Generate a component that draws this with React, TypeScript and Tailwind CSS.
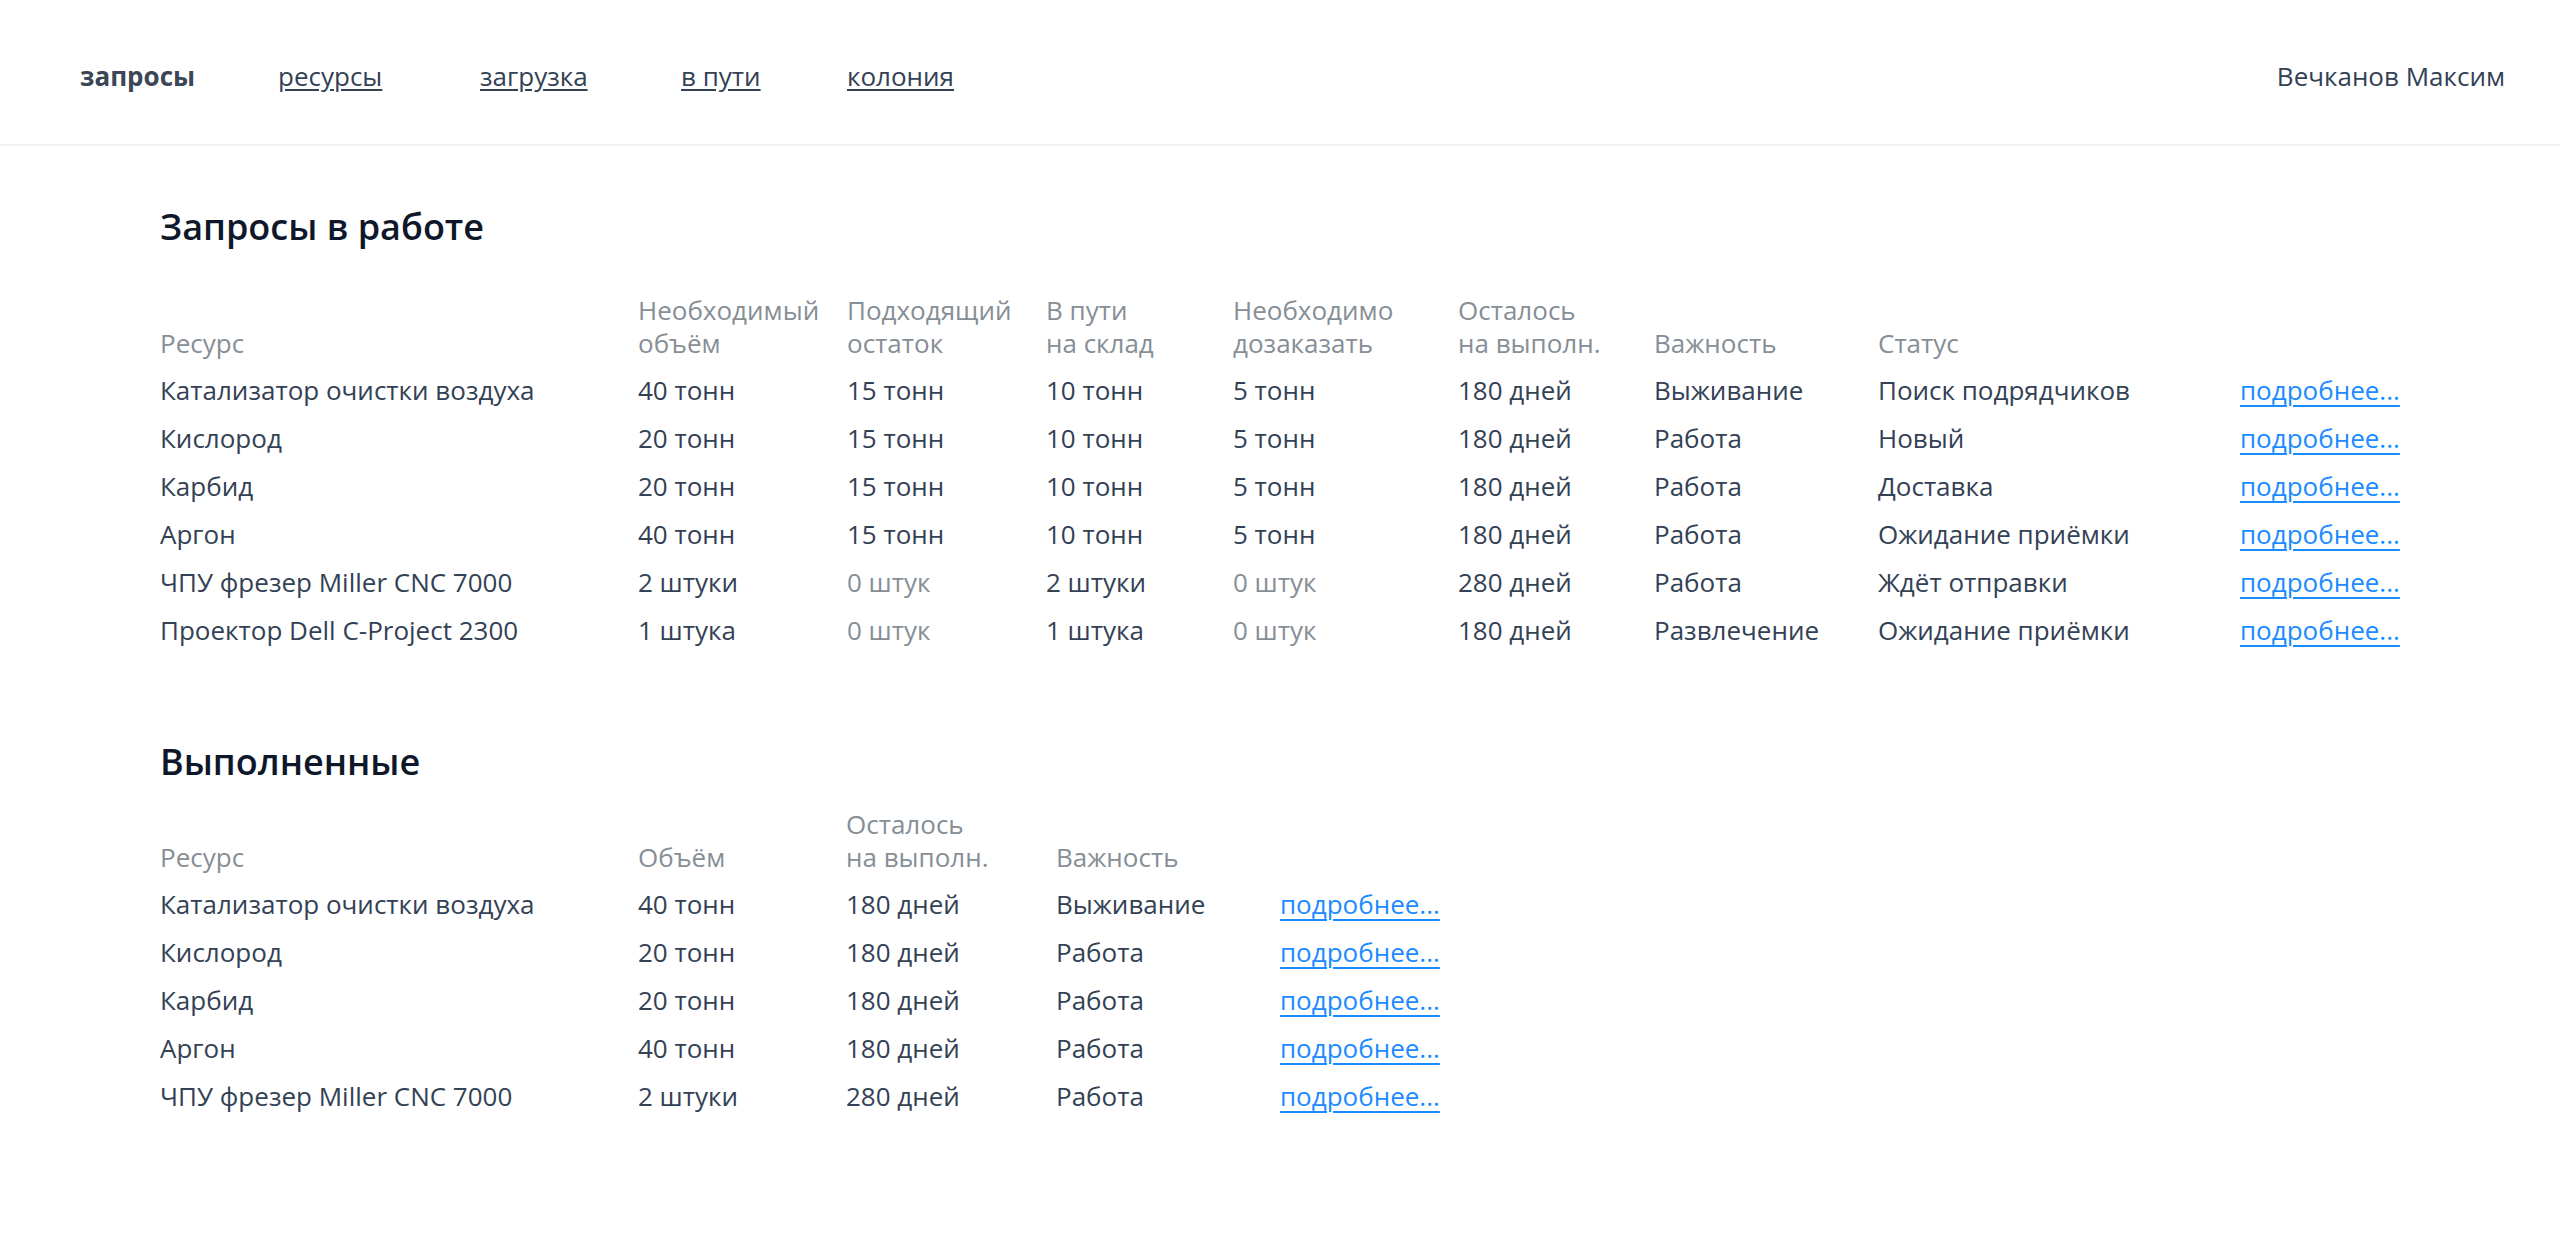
import React from 'react';

type ActiveRow = {
  name: string;
  need: string;
  fit: string;
  fitMuted?: boolean;
  transit: string;
  order: string;
  orderMuted?: boolean;
  left: string;
  priority: string;
  status: string;
};

type DoneRow = {
  name: string;
  volume: string;
  left: string;
  priority: string;
};

const activeRows: ActiveRow[] = [
  { name: 'Катализатор очистки воздуха', need: '40 тонн', fit: '15 тонн', transit: '10 тонн', order: '5 тонн', left: '180 дней', priority: 'Выживание', status: 'Поиск подрядчиков' },
  { name: 'Кислород', need: '20 тонн', fit: '15 тонн', transit: '10 тонн', order: '5 тонн', left: '180 дней', priority: 'Работа', status: 'Новый' },
  { name: 'Карбид', need: '20 тонн', fit: '15 тонн', transit: '10 тонн', order: '5 тонн', left: '180 дней', priority: 'Работа', status: 'Доставка' },
  { name: 'Аргон', need: '40 тонн', fit: '15 тонн', transit: '10 тонн', order: '5 тонн', left: '180 дней', priority: 'Работа', status: 'Ожидание приёмки' },
  { name: 'ЧПУ фрезер Miller CNC 7000', need: '2 штуки', fit: '0 штук', fitMuted: true, transit: '2 штуки', order: '0 штук', orderMuted: true, left: '280 дней', priority: 'Работа', status: 'Ждёт отправки' },
  { name: 'Проектор Dell C-Project 2300', need: '1 штука', fit: '0 штук', fitMuted: true, transit: '1 штука', order: '0 штук', orderMuted: true, left: '180 дней', priority: 'Развлечение', status: 'Ожидание приёмки' },
];

const doneRows: DoneRow[] = [
  { name: 'Катализатор очистки воздуха', volume: '40 тонн', left: '180 дней', priority: 'Выживание' },
  { name: 'Кислород', volume: '20 тонн', left: '180 дней', priority: 'Работа' },
  { name: 'Карбид', volume: '20 тонн', left: '180 дней', priority: 'Работа' },
  { name: 'Аргон', volume: '40 тонн', left: '180 дней', priority: 'Работа' },
  { name: 'ЧПУ фрезер Miller CNC 7000', volume: '2 штуки', left: '280 дней', priority: 'Работа' },
];

const font = { fontFamily: '"Open Sans", "Noto Sans", sans-serif' };

// ширины колонок взяты со скриншота
const activeCols = 'grid grid-cols-[478px_209px_199px_187px_225px_196px_224px_362px_auto]';
const doneCols = 'grid grid-cols-[478px_208px_210px_224px_auto]';

function Head({ children }: { children: React.ReactNode }) {
  return <div className="text-[#868e96] leading-[33px]">{children}</div>;
}

function More() {
  return (
    <a href="#" className="text-[#1a8cff] underline underline-offset-[5px] decoration-[2px]">
      подробнее...
    </a>
  );
}

export default function App() {
  return (
    <div className="min-h-screen bg-white text-[#334155] text-[26px]" style={font}>
      {/* шапка */}
      <header className="h-[146px] border-b-2 border-[#f2f2f2] flex items-center justify-between pt-[8px] pl-[80px] pr-[55px]">
        <nav className="flex items-center">
          <span className="w-[198px] font-bold text-[#3b4656]">запросы</span>
          <a href="#" className="w-[202px] underline underline-offset-[3px]">ресурсы</a>
          <a href="#" className="w-[201px] underline underline-offset-[3px]">загрузка</a>
          <a href="#" className="w-[166px] underline underline-offset-[3px]">в пути</a>
          <a href="#" className="underline underline-offset-[3px]">колония</a>
        </nav>
        <div>Вечканов Максим</div>
      </header>

      <main className="px-[160px]">
        {/* в работе */}
        <h2 className="mt-[57px] text-[36px] leading-[48px] font-semibold text-[#0f172a]">Запросы в работе</h2>
        <div className="mt-[43px]">
          <div className={`${activeCols} items-end mb-[6px]`}>
            <Head>Ресурс</Head>
            <Head>Необходимый<br />объём</Head>
            <Head>Подходящий<br />остаток</Head>
            <Head>В пути<br />на склад</Head>
            <Head>Необходимо<br />дозаказать</Head>
            <Head>Осталось<br />на выполн.</Head>
            <Head>Важность</Head>
            <Head>Статус</Head>
            <div />
          </div>
          {activeRows.map((r) => (
            <div key={r.name} className={`${activeCols} h-[48px] items-center`}>
              <div>{r.name}</div>
              <div>{r.need}</div>
              <div className={r.fitMuted ? 'text-[#868e96]' : ''}>{r.fit}</div>
              <div>{r.transit}</div>
              <div className={r.orderMuted ? 'text-[#868e96]' : ''}>{r.order}</div>
              <div>{r.left}</div>
              <div>{r.priority}</div>
              <div>{r.status}</div>
              <div><More /></div>
            </div>
          ))}
        </div>

        {/* выполненные */}
        <h2 className="mt-[84px] text-[36px] leading-[48px] font-semibold text-[#0f172a]">Выполненные</h2>
        <div className="mt-[22px]">
          <div className={`${doneCols} items-end mb-[6px]`}>
            <Head>Ресурс</Head>
            <Head>Объём</Head>
            <Head>Осталось<br />на выполн.</Head>
            <Head>Важность</Head>
            <div />
          </div>
          {doneRows.map((r) => (
            <div key={r.name} className={`${doneCols} h-[48px] items-center`}>
              <div>{r.name}</div>
              <div>{r.volume}</div>
              <div>{r.left}</div>
              <div>{r.priority}</div>
              <div><More /></div>
            </div>
          ))}
        </div>
      </main>
    </div>
  );
}
